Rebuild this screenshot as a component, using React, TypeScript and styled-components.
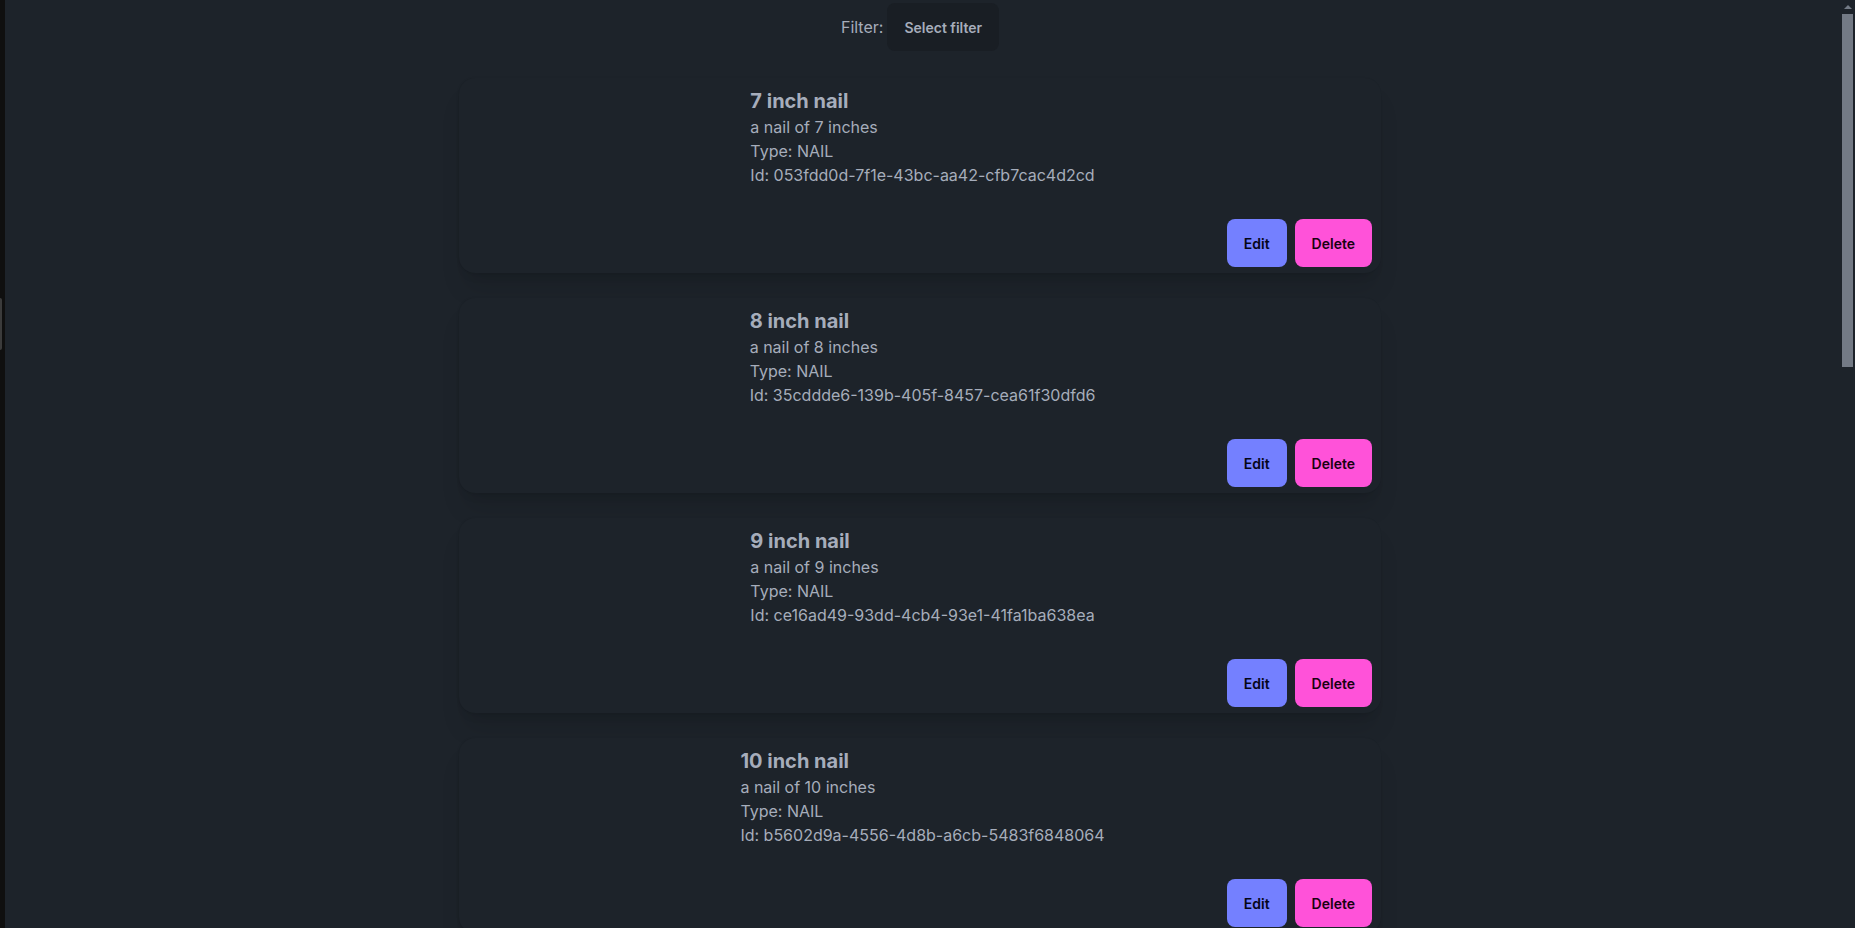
import React from "react";
import styled, { createGlobalStyle } from "styled-components";

const GlobalStyle = createGlobalStyle`
  html {
    color-scheme: dark;
  }
  body {
    margin: 0;
    background: #1d232a;
    color: #a6adbb;
    font-family: Inter, "Noto Sans", "Liberation Sans", sans-serif;
    overflow-x: hidden;
  }
`;

interface Nail {
  size: number;
  id: string;
}

const nails: Nail[] = [
  { size: 7, id: "053fdd0d-7f1e-43bc-aa42-cfb7cac4d2cd" },
  { size: 8, id: "35cddde6-139b-405f-8457-cea61f30dfd6" },
  { size: 9, id: "ce16ad49-93dd-4cb4-93e1-41fa1ba638ea" },
  { size: 10, id: "b5602d9a-4556-4d8b-a6cb-5483f6848064" },
  { size: 11, id: "7a41c2e0-2b8d-4f6a-9c13-e0d57b9a41f2" },
  { size: 12, id: "e2b93f17-5c0a-4d71-8b2e-93ac04f7d6b1" },
  { size: 13, id: "4fd10a8c-61e3-49b2-a7d5-2c8e19b0f3a7" },
  { size: 14, id: "91c7e5b2-0d4f-4a83-b6e9-5f2a7c1d8e04" },
  { size: 15, id: "c3a8d6f0-7e12-4b95-8d40-a1f6e2c9b537" },
  { size: 16, id: "0be47a9d-3c58-41f6-92ad-d8e5b7f01c62" },
];

// dark window edge on the left, drawn over the page
const WindowEdge = styled.div`
  position: fixed;
  left: 0;
  top: 0;
  bottom: 0;
  width: 5px;
  background: #0f0f0f;
  z-index: 10;

  &::after {
    content: "";
    position: absolute;
    left: 0;
    top: 298px;
    width: 2px;
    height: 52px;
    border-radius: 0 2px 2px 0;
    background: #3b3b3b;
  }
`;

// scrollbar as the browser drew it
const ScrollTrack = styled.div`
  position: fixed;
  right: 0;
  top: 0;
  bottom: 0;
  width: 15px;
  background: #1d232a;
  z-index: 10;

  &::before {
    content: "";
    position: absolute;
    top: 5px;
    left: 4px;
    border-left: 4px solid transparent;
    border-right: 4px solid transparent;
    border-bottom: 4px solid #737a85;
  }
`;

const ScrollThumb = styled.div`
  position: absolute;
  top: 14px;
  right: 2px;
  width: 11px;
  height: 353px;
  background: #737a85;
`;

const Page = styled.main`
  display: flex;
  flex-direction: column;
  align-items: center;
  padding: 3px 15px 40px 0;
`;

const FilterBar = styled.div`
  display: flex;
  align-items: center;
  gap: 4px;
  height: 48px;
`;

const FilterLabel = styled.span`
  font-size: 16px;
  line-height: 24px;
`;

const Button = styled.button<{ $bg: string; $fg: string }>`
  height: 48px;
  padding: 0 17px;
  border: none;
  border-radius: 8px;
  background: ${(p) => p.$bg};
  color: ${(p) => p.$fg};
  font-family: inherit;
  font-size: 14px;
  font-weight: 600;
  cursor: pointer;
`;

const CardList = styled.div`
  display: flex;
  flex-direction: column;
  gap: 25px;
  margin-top: 27px;
`;

const Card = styled.section`
  display: flex;
  flex-direction: column;
  width: 922px;
  box-sizing: border-box;
  padding: 9px 9px 6px;
  border-radius: 16px;
  background: #1d232a;
  box-shadow: 0 20px 25px -5px rgba(0, 0, 0, 0.1),
    0 8px 10px -6px rgba(0, 0, 0, 0.1), -1px 0 2px rgba(0, 0, 0, 0.08);
`;

const Info = styled.div`
  align-self: center;
  display: flex;
  flex-direction: column;
  margin-left: 5px;
`;

const Title = styled.h2`
  margin: 0;
  font-size: 20px;
  line-height: 28px;
  font-weight: 700;
`;

const Line = styled.p`
  margin: 0;
  font-size: 16px;
  line-height: 24px;
`;

const Actions = styled.div`
  display: flex;
  justify-content: flex-end;
  gap: 8px;
  margin-top: 32px;
`;

export default function App() {
  return (
    <>
      <GlobalStyle />
      <WindowEdge />
      <ScrollTrack>
        <ScrollThumb />
      </ScrollTrack>
      <Page>
        <FilterBar>
          <FilterLabel>Filter:</FilterLabel>
          <Button $bg="#191e24" $fg="#a6adbb">
            Select filter
          </Button>
        </FilterBar>
        <CardList>
          {nails.map((n) => (
            <Card key={n.id}>
              <Info>
                <Title>{n.size} inch nail</Title>
                <Line>a nail of {n.size} inches</Line>
                <Line>Type: NAIL</Line>
                <Line>Id: {n.id}</Line>
              </Info>
              <Actions>
                <Button $bg="#7480ff" $fg="#050617">
                  Edit
                </Button>
                <Button $bg="#ff52d9" $fg="#190211">
                  Delete
                </Button>
              </Actions>
            </Card>
          ))}
        </CardList>
      </Page>
    </>
  );
}
